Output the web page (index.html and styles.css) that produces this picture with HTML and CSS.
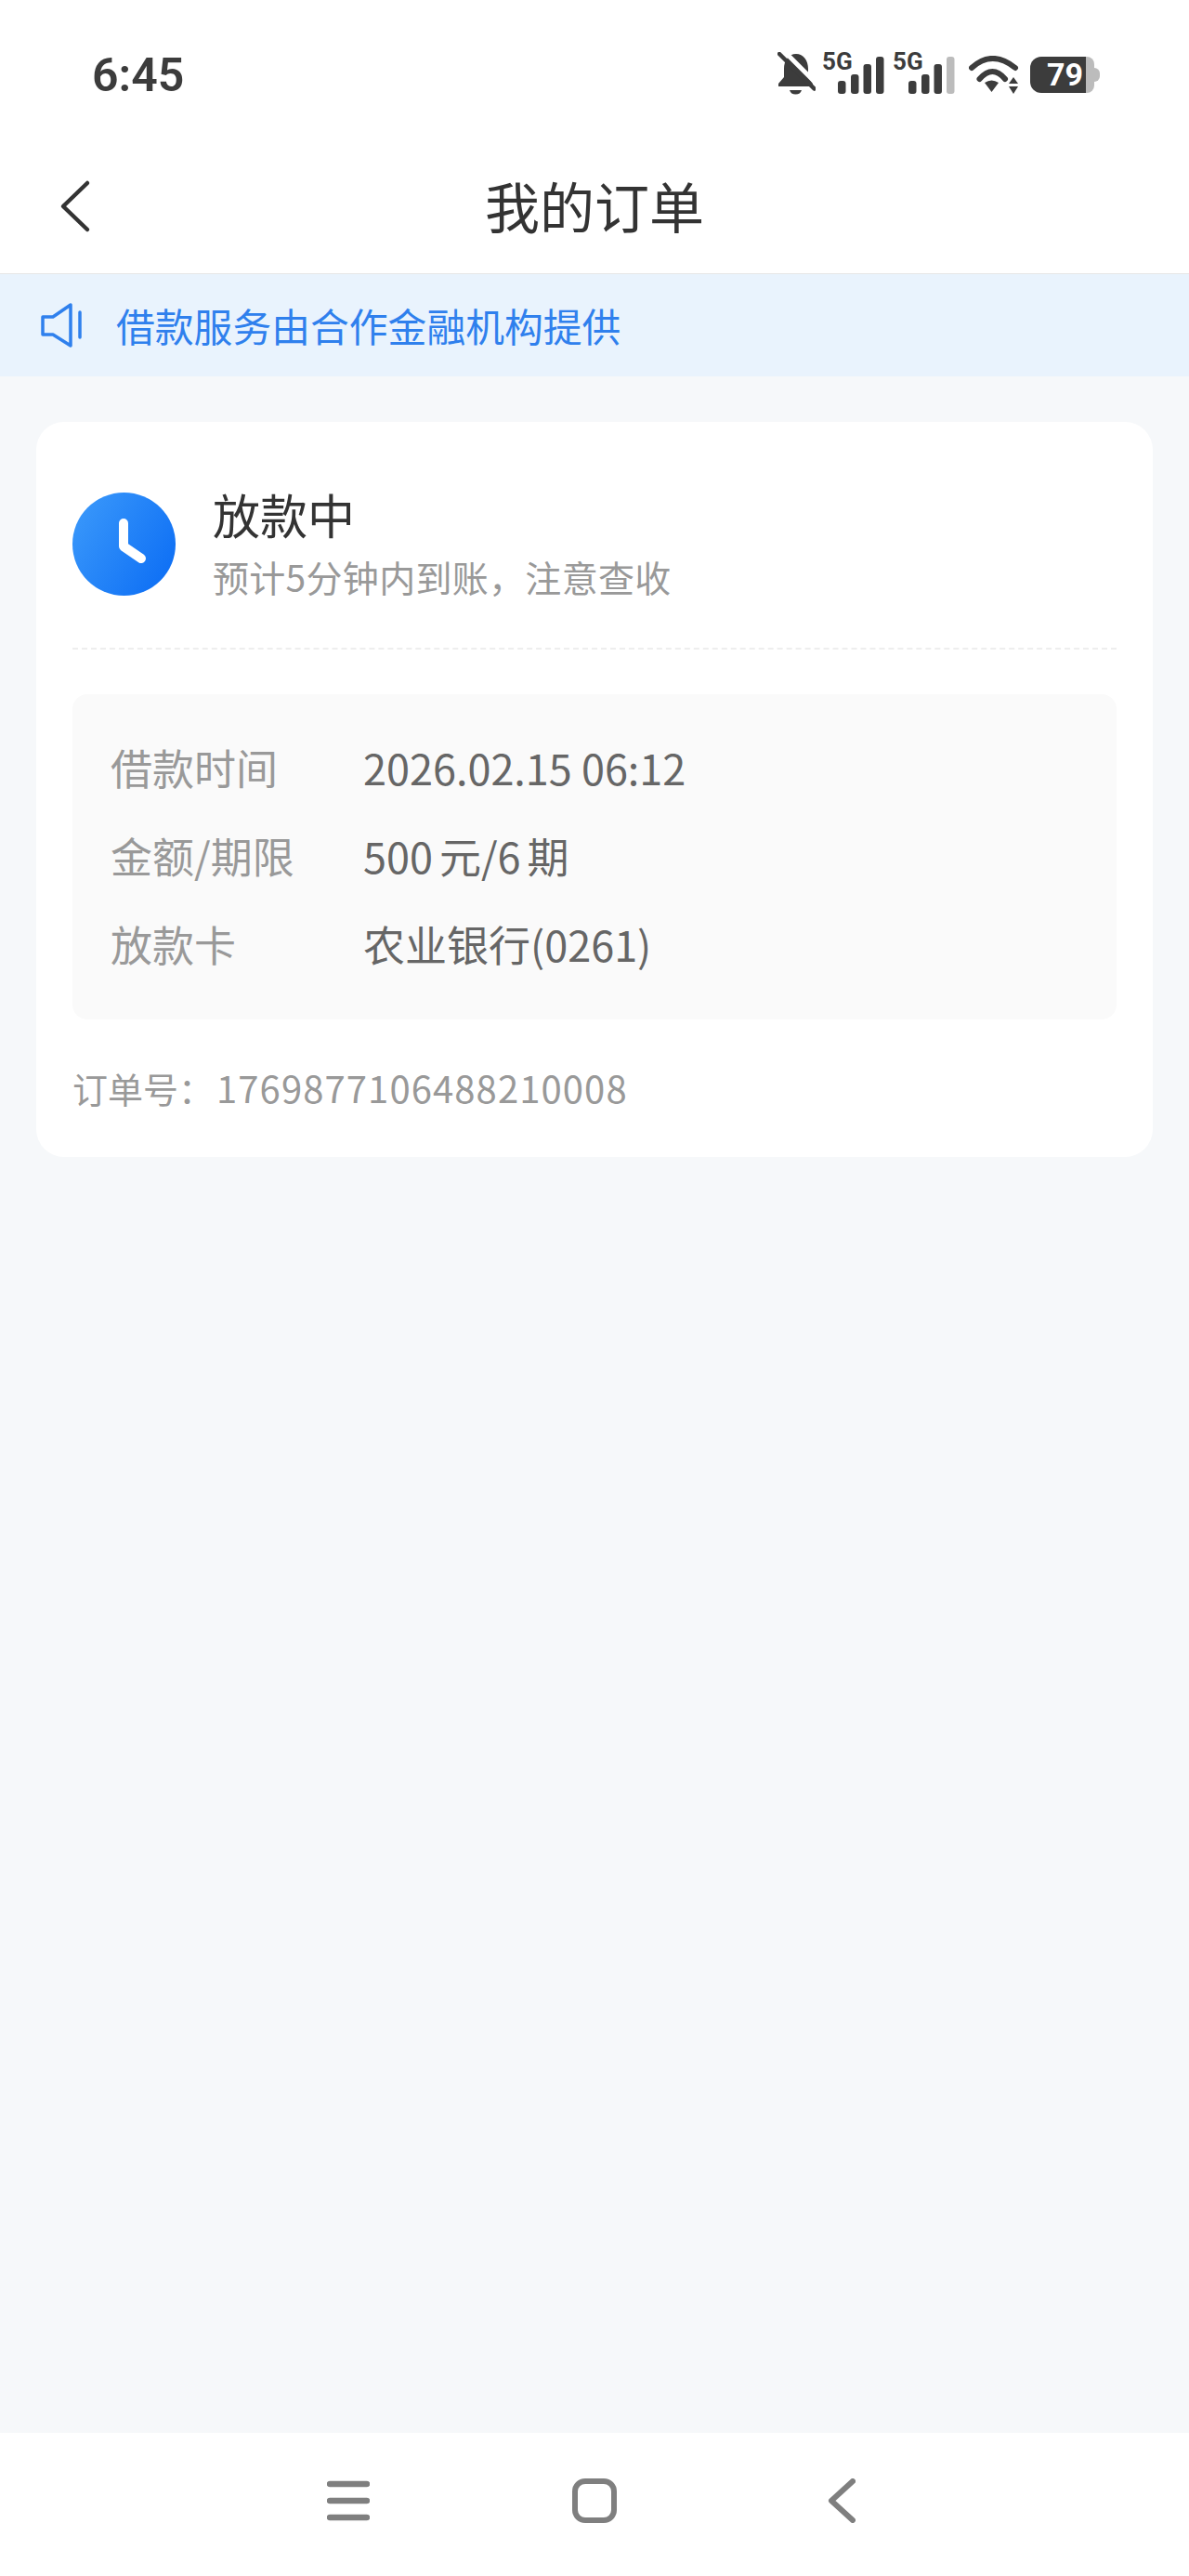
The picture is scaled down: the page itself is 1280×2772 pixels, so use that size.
FILE: index.html
```html
<!DOCTYPE html>
<html lang="zh-CN">
<head>
    <meta charset="UTF-8">
    <meta name="viewport" content="width=device-width, initial-scale=1.0">
    <title>我的订单</title>
    <link rel="stylesheet" href="styles.css">
</head>
<body>
    <div class="page">
        <div class="status-bar">
            <span class="time">6:45</span>
            <div class="status-icons">
                <svg class="icon-bell" width="41" height="46" viewBox="0 0 41 46">
                    <path d="M20 2C28 2 33 9 33 18V27L38 34V37H1V34L7 27V18C7 9 12 2 20 2Z" fill="#3c3c3c"/>
                    <path d="M13 41H26C25 44 23 45.500 19.500 45.500C16 45.500 14 44 13 41Z" fill="#3c3c3c"/>
                    <path d="M7 -1L46 38" stroke="#fff" stroke-width="5"/>
                    <path d="M2 2L39.500 39.500" stroke="#3c3c3c" stroke-width="4.500" stroke-linecap="round"/>
                </svg>
                <svg class="icon-signal" width="70" height="50" viewBox="0 -4 70 50">
                    <text class="net" x="0" y="20">5G</text>
                    <rect x="17" y="32" width="8.500" height="14" rx="3" fill="#3c3c3c"/>
                    <rect x="31" y="25" width="8.500" height="21" rx="3" fill="#3c3c3c"/>
                    <rect x="44.500" y="14" width="8.500" height="32" rx="3" fill="#3c3c3c"/>
                    <rect x="58" y="6" width="8.500" height="40" rx="3" fill="#3c3c3c"/>
                </svg>
                <svg class="icon-signal" width="70" height="50" viewBox="0 -4 70 50">
                    <text class="net" x="0" y="20">5G</text>
                    <rect x="17" y="32" width="8.500" height="14" rx="3" fill="#3c3c3c"/>
                    <rect x="31" y="25" width="8.500" height="21" rx="3" fill="#3c3c3c"/>
                    <rect x="44.500" y="14" width="8.500" height="32" rx="3" fill="#3c3c3c"/>
                    <rect x="58" y="6" width="8.500" height="40" rx="3" fill="#bcbcbc"/>
                </svg>
                <svg class="icon-wifi" width="54" height="42" viewBox="0 0 54 42">
                    <path d="M3 13Q25 -7 50 13" fill="none" stroke="#3c3c3c" stroke-width="6" stroke-linecap="round"/>
                    <path d="M11.500 25Q25.500 9 39 25" fill="none" stroke="#3c3c3c" stroke-width="6" stroke-linecap="round"/>
                    <path d="M17 29Q24.500 24 32 29L24.500 39Z" fill="#3c3c3c"/>
                    <path d="M43 30L48 23L53 30Z" fill="#3c3c3c"/>
                    <path d="M43 33L48 41L53 33Z" fill="#3c3c3c"/>
                </svg>
                <div class="battery">
                    <span class="battery-level">79</span>
                    <span class="battery-rest"></span>
                </div>
            </div>
        </div>

        <div class="header">
            <svg class="back" width="40" height="60" viewBox="0 0 40 60">
                <path d="M33 5L7 30L33 55" fill="none" stroke="#333" stroke-width="4.500" stroke-linecap="round" stroke-linejoin="round"/>
            </svg>
            <h1>我的订单</h1>
        </div>

        <div class="notice">
            <svg width="46" height="48" viewBox="0 0 46 48">
                <path d="M2 15H13L32 2V46L13 34H2Z" fill="none" stroke="#2f80ed" stroke-width="3.500" stroke-linejoin="round"/>
                <path d="M42 10V37" stroke="#2f80ed" stroke-width="3.500" stroke-linecap="round"/>
            </svg>
            <span>借款服务由合作金融机构提供</span>
        </div>

        <div class="main">
            <div class="card">
                <div class="order-status">
                    <svg class="clock" width="111" height="111" viewBox="0 0 111 111">
                        <defs>
                            <linearGradient id="clock-bg" x1="0" y1="0" x2="1" y2="0.600">
                                <stop offset="0" stop-color="#3d9bfb"/>
                                <stop offset="1" stop-color="#1172f5"/>
                            </linearGradient>
                        </defs>
                        <circle cx="55.500" cy="55.500" r="55.500" fill="url(#clock-bg)"/>
                        <path d="M55 33V58L74 71" fill="none" stroke="#fff" stroke-width="10" stroke-linecap="round" stroke-linejoin="round"/>
                    </svg>
                    <div class="status-text">
                        <div class="status-title">放款中</div>
                        <div class="status-sub">预计5分钟内到账，注意查收</div>
                    </div>
                </div>

                <div class="details">
                    <div class="row"><span class="label">借款时间</span><span class="value">2026.02.15 06:12</span></div>
                    <div class="row"><span class="label">金额/期限</span><span class="value">500<span class="unit">元</span>/6<span class="unit">期</span></span></div>
                    <div class="row"><span class="label">放款卡</span><span class="value">农业银行(0261)</span></div>
                </div>

                <div class="order-no">订单号：<span class="order-digits">1769877106488210008</span></div>
            </div>
        </div>

        <div class="nav-bar">
            <svg width="46" height="44" viewBox="0 0 46 44">
                <path d="M3 4H43M3 22H43M3 40H43" stroke="#7f7f7f" stroke-width="6.500" stroke-linecap="round"/>
            </svg>
            <svg width="48" height="48" viewBox="0 0 48 48">
                <rect x="3" y="3" width="42" height="42" rx="11" fill="none" stroke="#7f7f7f" stroke-width="6"/>
            </svg>
            <svg class="nav-back" width="30" height="48" viewBox="0 0 30 48">
                <path d="M27 3L4 24L27 45" fill="none" stroke="#7f7f7f" stroke-width="6" stroke-linecap="round" stroke-linejoin="round"/>
            </svg>
        </div>
    </div>
</body>
</html>
```

FILE: styles.css
```css
body {
    margin: 0;
    padding: 0;
    font-family: "Noto Sans CJK SC", "Noto Sans", sans-serif;
    background-color: #f6f8fa;
}

.page {
    display: flex;
    flex-direction: column;
    height: 2772px;
}

.status-bar {
    height: 150px;
    box-sizing: border-box;
    padding: 51px 96px 0 99px;
    background-color: white;
    display: flex;
    justify-content: space-between;
    align-items: flex-start;
}

.time {
    font-family: Roboto, sans-serif;
    font-weight: 600;
    font-size: 50px;
    line-height: 60px;
    color: #3c3c3c;
}

.status-icons {
    display: flex;
    align-items: flex-start;
}

.net {
    font-family: Roboto, sans-serif;
    font-weight: 700;
    font-size: 26px;
    fill: #3c3c3c;
}

.icon-bell {
    margin: 5px 7px 0 0;
}

.icon-signal {
    margin-right: 6px;
}

.icon-wifi {
    margin: 9px 12px 0 6px;
}

.battery {
    display: flex;
    align-items: center;
    width: 75px;
    margin-top: 10px;
}

.battery-level {
    width: 60px;
    height: 39px;
    padding-left: 18px;
    box-sizing: border-box;
    background-color: #3c3c3c;
    border-radius: 12px 0 0 12px;
    color: white;
    font-family: Roboto, sans-serif;
    font-weight: 700;
    font-size: 34px;
    line-height: 39px;
}

.battery-rest {
    width: 9px;
    height: 39px;
    background-color: #bcbcbc;
    border-radius: 0 8px 8px 0;
    position: relative;
}

.battery-rest::after {
    content: "";
    position: absolute;
    left: 9px;
    top: 12px;
    width: 6px;
    height: 15px;
    background-color: #bcbcbc;
    border-radius: 0 6px 6px 0;
}

.header {
    height: 145px;
    box-sizing: border-box;
    padding-bottom: 3px;
    background-color: white;
    border-bottom: 1px solid #e6e6e6;
    position: relative;
    display: flex;
    justify-content: center;
    align-items: center;
}

.back {
    position: absolute;
    left: 61px;
    top: 42px;
}

h1 {
    margin: 0;
    font-size: 59px;
    font-weight: 400;
    color: #333;
}

.notice {
    height: 110px;
    box-sizing: border-box;
    padding-left: 44px;
    background-color: #e9f3fd;
    display: flex;
    align-items: center;
    gap: 35px;
    color: #2f80ed;
    font-size: 41.8px;
}

.main {
    flex: 1;
    padding: 49px 39px 0;
}

.card {
    height: 791px;
    box-sizing: border-box;
    padding: 76px 39px 0;
    background-color: white;
    border-radius: 30px;
}

.order-status {
    display: flex;
    align-items: flex-start;
    gap: 40px;
    padding-bottom: 46px;
    border-bottom: 2px dashed #eeeeee;
}

.clock {
    flex-shrink: 0;
}

.status-text {
    margin-top: -9px;
}

.status-title {
    font-size: 51px;
    line-height: 64px;
    color: #333;
}

.status-sub {
    margin-top: 4px;
    font-size: 39px;
    letter-spacing: 0.3px;
    line-height: 62px;
    color: #999;
}

.details {
    margin-top: 48px;
    height: 350px;
    box-sizing: border-box;
    padding: 31px 41px 0;
    background-color: #fafafa;
    border-radius: 16px;
}

.row {
    display: flex;
    align-items: center;
    height: 95px;
    font-size: 45px;
}

.label {
    width: 272px;
    color: #999;
}

.value {
    color: #666;
}

.unit {
    margin-left: 7px;
}

.order-no {
    margin-top: 46px;
    font-size: 38px;
    line-height: 54px;
    color: #999;
}

.order-digits {
    margin-left: 3px;
    font-size: 40px;
    letter-spacing: 1.1px;
}

.nav-bar {
    height: 154px;
    box-sizing: border-box;
    padding: 0 0 8px 352px;
    background-color: white;
    display: flex;
    align-items: center;
    gap: 218px;
}

.nav-back {
    margin-left: 9px;
}
```
